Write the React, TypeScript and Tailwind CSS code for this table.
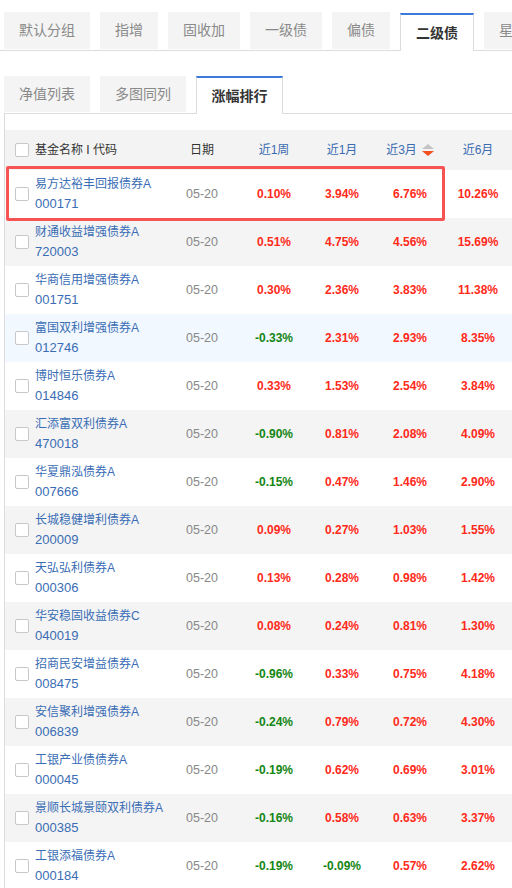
const font = { fontFamily: '"Liberation Sans", "Noto Sans CJK SC", sans-serif' };

const topTabs = ['默认分组', '指增', '固收加', '一级债', '偏债', '二级债', '星级'];
const subTabs = ['净值列表', '多图同列', '涨幅排行'];

type Row = { name: string; code: string; w: string; m: string; q: string; h: string };

const rows: Row[] = [
  { name: '易方达裕丰回报债券A', code: '000171', w: '0.10%', m: '3.94%', q: '6.76%', h: '10.26%' },
  { name: '财通收益增强债券A', code: '720003', w: '0.51%', m: '4.75%', q: '4.56%', h: '15.69%' },
  { name: '华商信用增强债券A', code: '001751', w: '0.30%', m: '2.36%', q: '3.83%', h: '11.38%' },
  { name: '富国双利增强债券A', code: '012746', w: '-0.33%', m: '2.31%', q: '2.93%', h: '8.35%' },
  { name: '博时恒乐债券A', code: '014846', w: '0.33%', m: '1.53%', q: '2.54%', h: '3.84%' },
  { name: '汇添富双利债券A', code: '470018', w: '-0.90%', m: '0.81%', q: '2.08%', h: '4.09%' },
  { name: '华夏鼎泓债券A', code: '007666', w: '-0.15%', m: '0.47%', q: '1.46%', h: '2.90%' },
  { name: '长城稳健增利债券A', code: '200009', w: '0.09%', m: '0.27%', q: '1.03%', h: '1.55%' },
  { name: '天弘弘利债券A', code: '000306', w: '0.13%', m: '0.28%', q: '0.98%', h: '1.42%' },
  { name: '华安稳固收益债券C', code: '040019', w: '0.08%', m: '0.24%', q: '0.81%', h: '1.30%' },
  { name: '招商民安增益债券A', code: '008475', w: '-0.96%', m: '0.33%', q: '0.75%', h: '4.18%' },
  { name: '安信聚利增强债券A', code: '006839', w: '-0.24%', m: '0.79%', q: '0.72%', h: '4.30%' },
  { name: '工银产业债债券A', code: '000045', w: '-0.19%', m: '0.62%', q: '0.69%', h: '3.01%' },
  { name: '景顺长城景颐双利债券A', code: '000385', w: '-0.16%', m: '0.58%', q: '0.63%', h: '3.37%' },
  { name: '工银添福债券A', code: '000184', w: '-0.19%', m: '-0.09%', q: '0.57%', h: '2.62%' },
];

const Check = () => <span className="block h-[14px] w-[14px] shrink-0 rounded-[2px] border border-[#c8c8c8] bg-white" />;

const Pct = ({ v }: { v: string }) => (
  <div className={`w-[68px] shrink-0 text-center text-[12px] font-bold ${v.startsWith('-') ? 'text-[#138613]' : 'text-[#ff2a1a]'}`}>{v}</div>
);

export default function App() {
  return (
    <div className="h-[888px] w-[512px] overflow-hidden bg-white" style={font}>
      <div className="flex h-[51px] items-end gap-[10px] border-b border-[#dcdcdc] pl-[4px]">
        {topTabs.map((t) =>
          t === '二级债' ? (
            <div key={t} className="-mb-px flex h-[38px] shrink-0 items-center border-x border-t-2 border-x-[#dcdcdc] border-t-[#3a7ad8] bg-white px-[15px] text-[14px] font-bold text-[#333]">
              {t}
            </div>
          ) : (
            <div key={t} className="mb-px flex h-[37px] shrink-0 items-center bg-[#f4f4f4] px-[15px] text-[14px] text-[#8a8a8a]">
              {t}
            </div>
          )
        )}
      </div>
      <div className="ml-[4px] mt-[26px] flex h-[37px] items-end gap-[10px] border-b border-[#dcdcdc]">
        {subTabs.map((t) =>
          t === '涨幅排行' ? (
            <div key={t} className="-mb-px flex h-[38px] w-[87px] shrink-0 items-center justify-center border-x border-t-2 border-x-[#dcdcdc] border-t-[#3a7ad8] bg-white text-[14px] font-bold text-[#333]">
              {t}
            </div>
          ) : (
            <div key={t} className="mb-px flex h-[36px] w-[86px] shrink-0 items-center justify-center bg-[#f4f4f4] text-[14px] text-[#8a8a8a]">
              {t}
            </div>
          )
        )}
      </div>
      <div className="relative ml-[4px] border-l border-[#dcdcdc] pt-[16px]">
        <div className="flex h-[40px] items-center bg-[#f3f3f3] text-[12px]">
          <div className="w-[30px] shrink-0 pl-[10px]"><Check /></div>
          <div className="w-[135px] shrink-0 text-[#333]">基金名称 I 代码</div>
          <div className="w-[70px] shrink-0 pr-[6px] text-center text-[#333]">日期</div>
          <div className="w-[68px] shrink-0 text-center text-[#3c6cb0]">近1周</div>
          <div className="w-[68px] shrink-0 text-center text-[#3c6cb0]">近1月</div>
          <div className="flex w-[68px] shrink-0 items-center justify-center gap-[5px] text-[#3c6cb0]">
            近3月
            <svg width="12" height="12" viewBox="0 0 12 12">
              <path d="M6 0 L12 5 H0 Z" fill="#c4c4c4" />
              <path d="M0 7 H12 L6 12 Z" fill="#f0501e" />
            </svg>
          </div>
          <div className="w-[68px] shrink-0 text-center text-[#3c6cb0]">近6月</div>
        </div>
        {rows.map((r, i) => (
          <div
            key={r.code}
            className={`flex h-[48px] items-center ${i === 3 ? 'bg-[#f2f8ff]' : i % 2 === 1 ? 'bg-[#f4f4f4]' : 'bg-white'}`}
          >
            <div className="w-[30px] shrink-0 pl-[10px]"><Check /></div>
            <div className="w-[135px] shrink-0 whitespace-nowrap text-[12px] leading-[19px] text-[#3a6db5]">
              <div>{r.name}</div>
              <div className="text-[13px]">{r.code}</div>
            </div>
            <div className="w-[70px] shrink-0 pr-[6px] text-center text-[12.5px] text-[#888]">05-20</div>
            <Pct v={r.w} />
            <Pct v={r.m} />
            <Pct v={r.q} />
            <Pct v={r.h} />
          </div>
        ))}
        <div className="pointer-events-none absolute left-[1px] top-[52px] h-[55px] w-[439px] rounded-[2px] border-[3px] border-[#f65454]" />
      </div>
    </div>
  );
}
